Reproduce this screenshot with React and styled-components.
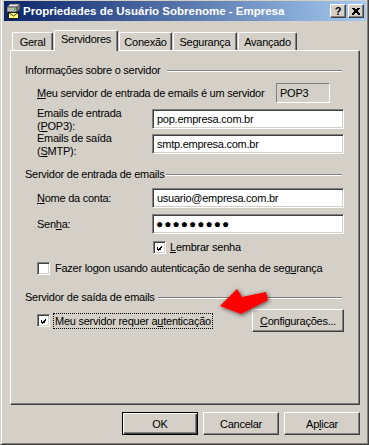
import React from 'react'
import styled, { createGlobalStyle } from 'styled-components'

const GlobalStyle = createGlobalStyle`
  html, body {
    margin: 0;
    padding: 0;
    background: #D4D0C8;
  }
  body {
    font-family: 'Liberation Sans', Arial, sans-serif;
    font-size: 11px;
  }
`;

const Window = styled.div`
  width: 369px;
  height: 445px;
  box-sizing: border-box;
  background: #D4D0C8;
  border-left: 1px solid #D4D0C8;
  border-right: 1px solid #404040;
  border-bottom: 1px solid #404040;
  box-shadow: inset 1px 0 #fff, inset -1px -1px #808080;
  padding: 1px 2px 3px 3px;
  display: flex;
  flex-direction: column;
  color: #000;
  letter-spacing: -0.25px;
`;

const TitleBar = styled.div`
  height: 20px;
  flex: none;
  display: flex;
  align-items: center;
  padding: 0 2px 0 1px;
  background: linear-gradient(to right, #0A246A, #A6CAF0);
`;

const TitleText = styled.div`
  flex: 1;
  margin-left: 2px;
  color: #fff;
  font-weight: bold;
  font-size: 11.5px;
  letter-spacing: 0;
  white-space: nowrap;
`;

const CaptionButton = styled.div`
  width: 16px;
  height: 14px;
  box-sizing: border-box;
  margin-left: ${p => p.$gap || 0}px;
  background: #D4D0C8;
  border: 1px solid;
  border-color: #fff #404040 #404040 #fff;
  box-shadow: inset -1px -1px #808080;
  display: flex;
  align-items: center;
  justify-content: center;
  font-weight: bold;
  font-size: 11px;
  line-height: 12px;
`;

const Body = styled.div`
  flex: 1;
  display: flex;
  flex-direction: column;
  padding: 9px 6px 0 6px;
`;

const TabStrip = styled.div`
  height: 20px;
  display: flex;
  align-items: flex-end;
  padding-left: 2px;
  position: relative;
  z-index: 1;
`;

const Tab = styled.div`
  width: ${p => p.$w}px;
  height: ${p => (p.$active ? 21 : 18)}px;
  margin-bottom: ${p => (p.$active ? -1 : 0)}px;
  margin-right: 1px;
  box-sizing: border-box;
  background: #D4D0C8;
  border-top: 1px solid #fff;
  border-left: 1px solid #fff;
  border-right: 1px solid #404040;
  border-radius: 2px 2px 0 0;
  box-shadow: inset -1px 0 #808080;
  padding-top: ${p => (p.$active ? 2 : 3)}px;
  text-align: center;
  line-height: 13px;
  white-space: nowrap;
`;

const Panel = styled.div`
  position: relative;
  height: 355px;
  flex: none;
  box-sizing: border-box;
  border: 1px solid;
  border-color: #fff #404040 #404040 #fff;
  box-shadow: inset -1px -1px #808080;
  padding: 0 14px 0 14px;
  display: flex;
  flex-direction: column;
`;

const GroupHeader = styled.div`
  width: 317px;
  height: 13px;
  margin-top: ${p => p.$top}px;
  display: flex;
  align-items: center;
  line-height: 13px;
  white-space: nowrap;
`;

const GroupLine = styled.div`
  flex: 1;
  height: 0;
  margin-left: ${p => p.$gap || 4}px;
  border-top: 1px solid #808080;
  border-bottom: 1px solid #fff;
`;

const ServerTypeRow = styled.div`
  margin: ${p => p.$top}px 0 0 12px;
  height: 20px;
  display: grid;
  grid-template-columns: 239px 54px;
  align-items: center;
  white-space: nowrap;
`;

const StaticBox = styled.div`
  height: 20px;
  box-sizing: border-box;
  border-top: 1px solid #808080;
  border-left: 1px solid #808080;
  border-right: 1px solid #fff;
  border-bottom: 1px solid #fff;
  padding-left: 3px;
  line-height: 18px;
`;

const FieldRow = styled.div`
  margin: ${p => p.$top}px 0 0 12px;
  height: 20px;
  display: grid;
  grid-template-columns: 115px 192px;
  align-items: ${p => (p.$twoLine ? 'start' : 'center')};
`;

const FieldLabel = styled.div`
  line-height: 13px;
  margin-top: ${p => (p.$twoLine ? -2 : 0)}px;
  white-space: nowrap;
`;

const TextBox = styled.div`
  height: 20px;
  box-sizing: border-box;
  background: #fff;
  border: 1px solid;
  border-color: #808080 #fff #fff #808080;
  box-shadow: inset 1px 1px #404040, inset -1px -1px #D4D0C8;
  padding-left: ${p => (p.$password ? 3 : 4)}px;
  line-height: 18px;
  white-space: nowrap;
  overflow: hidden;
  letter-spacing: ${p => (p.$password ? '1px' : 'inherit')};
  font-size: ${p => (p.$password ? '12px' : 'inherit')};
`;

const CheckRow = styled.div`
  margin: ${p => p.$top}px 0 0 ${p => p.$indent}px;
  height: 13px;
  display: flex;
  align-items: center;
  white-space: nowrap;
`;

const AuthRow = styled.div`
  margin: ${p => p.$top}px 0 0 12px;
  width: 307px;
  height: 23px;
  display: flex;
  align-items: center;
  white-space: nowrap;
`;

const Box = styled.div`
  width: 13px;
  height: 13px;
  flex: none;
  box-sizing: border-box;
  background: #fff;
  border: 1px solid;
  border-color: #808080 #fff #fff #808080;
  box-shadow: inset 1px 1px #404040, inset -1px -1px #D4D0C8;
  padding: 2px;
  display: flex;
`;

const CheckLabel = styled.span`
  margin-left: ${p => p.$gap}px;
  line-height: 13px;
`;

const FocusLabel = styled.span`
  margin-left: 3px;
  padding: 0 1px 0 1px;
  height: 14px;
  line-height: 14px;
  border: 1px dotted #000;
`;

const Button = styled.div`
  width: ${p => p.$w}px;
  height: 23px;
  box-sizing: border-box;
  margin-left: ${p => p.$ml || 0};
  background: #D4D0C8;
  border: 1px solid;
  border-color: ${p => (p.$default ? '#000' : '#fff #404040 #404040 #fff')};
  box-shadow: ${p =>
    p.$default
      ? 'inset 1px 1px #fff, inset -1px -1px #404040, inset -2px -2px #808080'
      : 'inset -1px -1px #808080'};
  display: flex;
  align-items: center;
  justify-content: center;
  white-space: nowrap;
`;

const ButtonRow = styled.div`
  margin-top: 7px;
  display: flex;
  justify-content: flex-end;
  gap: 5px;
`;

const Arrow = styled.svg`
  position: absolute;
  left: 204px;
  top: 233px;
  overflow: visible;
`;

function CheckMark() {
  const cols = [2, 3, 4, 3, 2, 1, 0];
  return (
    <svg width="9" height="9" viewBox="0 0 9 9" shapeRendering="crispEdges">
      {cols.map((y, i) => (
        <rect key={i} x={i + 1} y={y + 1} width="1" height="3" fill="#000" />
      ))}
    </svg>
  );
}

function CheckBox({ checked }) {
  return <Box>{checked && <CheckMark />}</Box>;
}

function WindowIcon() {
  return (
    <svg width="16" height="16" viewBox="0 0 16 16">
      <path d="M2 4 L5 1 L15 1 L12 4 Z" fill="#E8E8E8" stroke="#404040" strokeWidth="0.8" />
      <path d="M2 4 L12 4 L12 9 L2 9 Z" fill="#B8B8B8" stroke="#404040" strokeWidth="0.8" />
      <path d="M12 4 L15 1 L15 6 L12 9 Z" fill="#808080" stroke="#404040" strokeWidth="0.8" />
      <rect x="9" y="5.5" width="1.6" height="1.6" fill="#00C000" />
      <rect x="3.5" y="9.5" width="10" height="6" fill="#FFF87A" stroke="#000" strokeWidth="0.8" />
      <path d="M3.5 9.5 L8.5 13 L13.5 9.5" fill="none" stroke="#000" strokeWidth="0.8" />
    </svg>
  );
}

function CloseGlyph() {
  return (
    <svg width="8" height="7" viewBox="0 0 8 7" shapeRendering="crispEdges">
      <path d="M0.5 0 L7.5 7 M1.5 0 L8 6.5 M7.5 0 L0.5 7 M6.5 0 L0 6.5" stroke="#000" strokeWidth="1" />
    </svg>
  );
}

export default function App() {
  return (
    <>
      <GlobalStyle />
      <Window>
        <TitleBar>
          <WindowIcon />
          <TitleText>Propriedades de Usuário Sobrenome - Empresa</TitleText>
          <CaptionButton>?</CaptionButton>
          <CaptionButton $gap={2}><CloseGlyph /></CaptionButton>
        </TitleBar>
        <Body>
          <TabStrip>
            <Tab $w={41}>Geral</Tab>
            <Tab $w={64} $active>Servidores</Tab>
            <Tab $w={53}>Conexão</Tab>
            <Tab $w={64}>Segurança</Tab>
            <Tab $w={59}>Avançado</Tab>
          </TabStrip>
          <Panel>
            <GroupHeader $top={13}>
              Informações sobre o servidor
              <GroupLine $gap={7} />
            </GroupHeader>
            <ServerTypeRow $top={6}>
              <span><u>M</u>eu servidor de entrada de emails é um  servidor</span>
              <StaticBox>POP3</StaticBox>
            </ServerTypeRow>
            <FieldRow $top={6} $twoLine>
              <FieldLabel $twoLine>Emails de entrada<br />(<u>P</u>OP3):</FieldLabel>
              <TextBox>pop.empresa.com.br</TextBox>
            </FieldRow>
            <FieldRow $top={5} $twoLine>
              <FieldLabel $twoLine>Emails de saída<br />(<u>S</u>MTP):</FieldLabel>
              <TextBox>smtp.empresa.com.br</TextBox>
            </FieldRow>

            <GroupHeader $top={14}>
              Servidor de entrada de emails
              <GroupLine $gap={1} />
            </GroupHeader>
            <FieldRow $top={7}>
              <FieldLabel><u>N</u>ome da conta:</FieldLabel>
              <TextBox>usuario@empresa.com.br</TextBox>
            </FieldRow>
            <FieldRow $top={6}>
              <FieldLabel>Sen<u>h</u>a:</FieldLabel>
              <TextBox $password>●●●●●●●●●</TextBox>
            </FieldRow>
            <CheckRow $top={7} $indent={128}>
              <CheckBox checked />
              <CheckLabel $gap={4}><u>L</u>embrar senha</CheckLabel>
            </CheckRow>
            <CheckRow $top={8} $indent={12}>
              <CheckBox />
              <CheckLabel $gap={5}>Fazer logon usando autenticação de senha de seg<u>u</u>rança</CheckLabel>
            </CheckRow>

            <GroupHeader $top={16}>
              Servidor de saída de emails
              <GroupLine $gap={3} />
            </GroupHeader>
            <AuthRow $top={5}>
              <CheckBox checked />
              <FocusLabel>Meu servidor requer a<u>u</u>tenticação</FocusLabel>
              <Button $w={92} $ml="auto"><u>C</u>onfigurações...</Button>
            </AuthRow>

            <Arrow width="64" height="40" viewBox="214 283 64 40">
              <defs>
                <filter id="arrowShade" x="-30%" y="-40%" width="160%" height="180%">
                  <feDropShadow dx="1" dy="1" stdDeviation="2" floodColor="#202020" floodOpacity="0.8" />
                </filter>
              </defs>
              <polygon
                points="219,305 236,288 241,296 265,291 267,299 240,313"
                fill="#FF0000"
                filter="url(#arrowShade)"
              />
            </Arrow>
          </Panel>
          <ButtonRow>
            <Button $w={76} $default>OK</Button>
            <Button $w={76}>Cancelar</Button>
            <Button $w={76}>Ap<u>l</u>icar</Button>
          </ButtonRow>
        </Body>
      </Window>
    </>
  );
}
